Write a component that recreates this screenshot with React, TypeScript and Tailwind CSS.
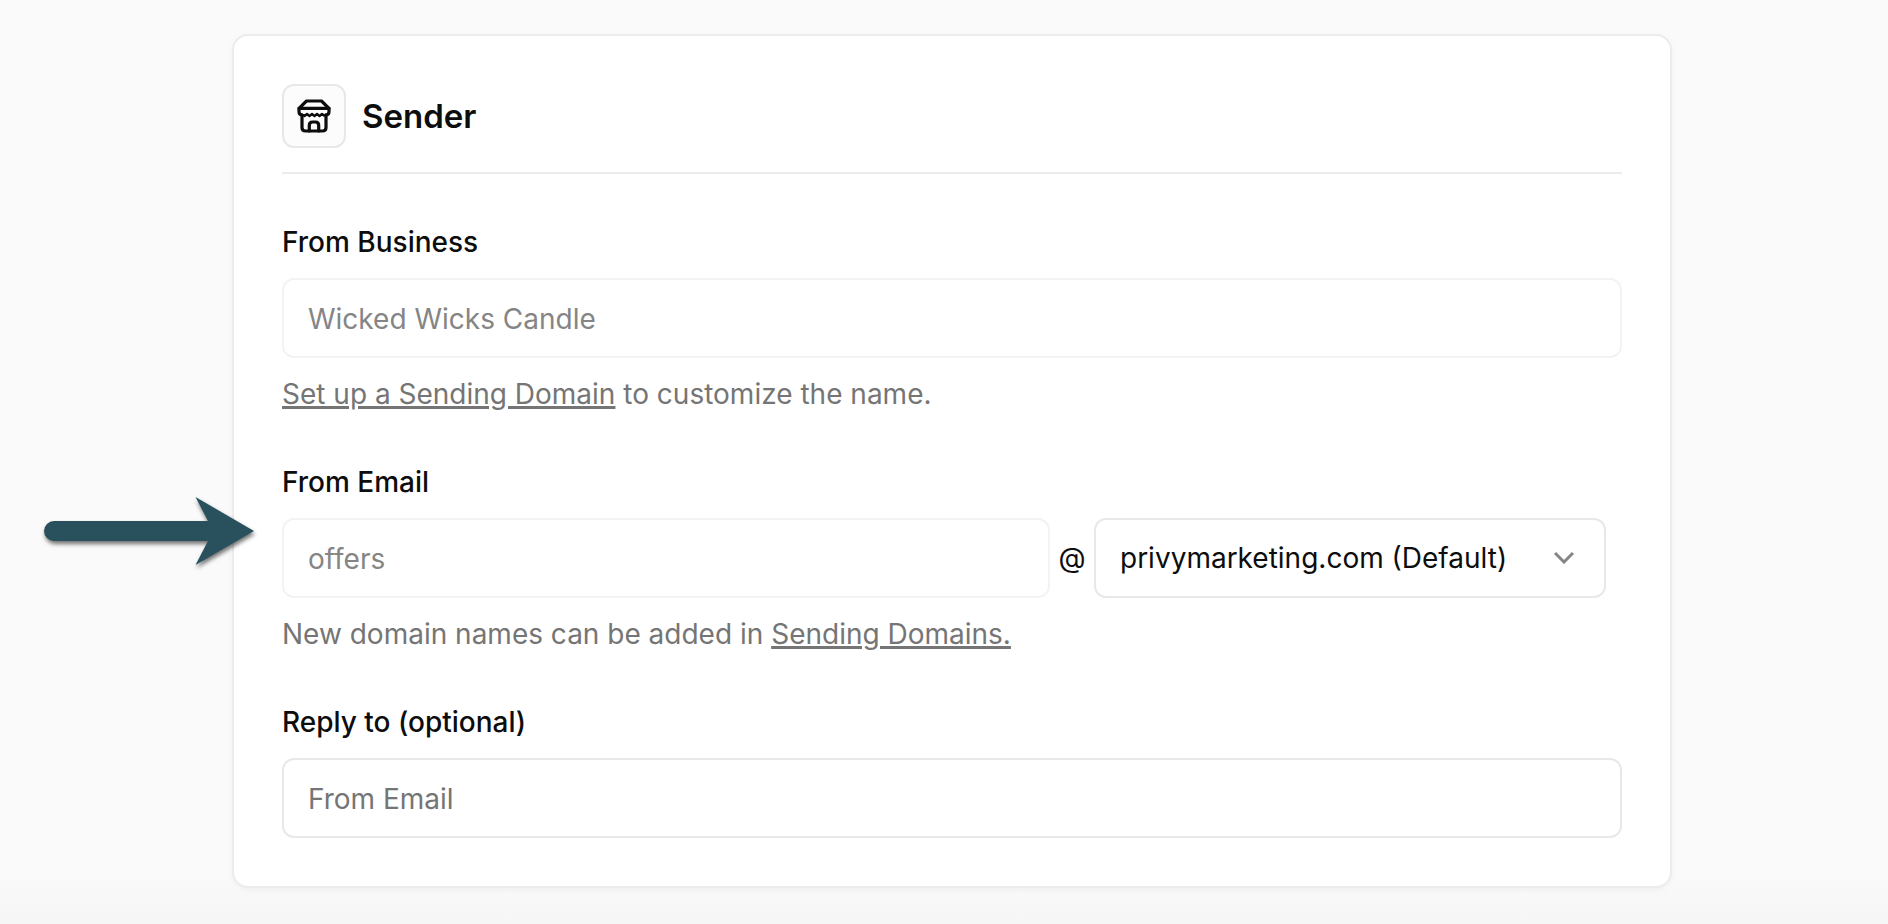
import React from "react";

const labelClass = "block text-[28px] leading-10 font-medium text-[#0d0d0d]";
const helpClass = "mt-4 text-[28px] leading-10 text-[#757575]";
const linkClass = "underline decoration-[3px] underline-offset-2";
const inputClass = "block w-full h-20 rounded-xl border-2 border-[#e8e8e8] bg-white px-6 pt-0.5 text-[28px] text-[#0d0d0d] placeholder:text-[#757575] disabled:border-[#f3f3f3] disabled:text-[#858585]";

const StoreIcon: React.FC = () => (
  <svg
    width="34"
    height="34"
    viewBox="0 0 34 34"
    fill="none"
    stroke="#0d0d0d"
    strokeWidth="3.2"
    strokeLinecap="round"
    strokeLinejoin="round"
    aria-hidden="true"
  >
    <path d="M2 9.300 L9.500 2 H24.500 L32 9.300 Z" />
    <path d="M2 9.300 V12.500 C2 15 3.200 16 5.200 16 M32 9.300 V12.500 C32 15 30.800 16 28.800 16" />
    <path d="M5 15.500 L7.500 17 L10 15 L12.500 17 L15 15 L17.500 17 L20 15 L22.500 17 L25 15 L27 16.500 L29 15.500" strokeWidth="2.4" />
    <path d="M5 16.500 V28.500 C5 31 6 32 8.500 32 H25.500 C28 32 29 31 29 28.500 V16.500" />
    <path d="M12.300 32 V26.500 C12.300 24 13.300 23 15.500 23 H18.500 C20.700 23 21.700 24 21.700 26.500 V32" />
  </svg>
);

const ChevronIcon: React.FC = () => (
  <svg width="20" height="12" viewBox="0 0 20 12" fill="none" stroke="#858585" strokeWidth="3" aria-hidden="true">
    <path d="M1 1 L10 10 L19 1" />
  </svg>
);

const PointerArrow: React.FC = () => (
  <svg
    className="absolute -left-[238px] -top-[22px] overflow-visible drop-shadow-[1px_3px_2px_rgba(0,0,0,0.55)] pointer-events-none"
    width="210"
    height="70"
    viewBox="0 0 210 70"
    aria-hidden="true"
  >
    <path d="M10 25 H164 L151.500 1 L210 35 L151.500 69 L164 45 H10 A10 10 0 0 1 10 25 Z" fill="#28505d" />
  </svg>
);

const App: React.FC = () => {
  return (
    <div className="min-h-screen bg-[linear-gradient(to_bottom,#fafafa_94%,#f6f6f6)] pt-[34px] pb-9 pl-58 pr-54 font-['Inter',sans-serif]">
      <form className="rounded-2xl border-2 border-[#ececec] bg-white p-12 shadow-[0_2px_6px_rgba(0,0,0,0.04)]">
        <div className="flex items-center gap-4 border-b-2 border-[#ececec] pb-6">
          <div className="flex size-16 items-center justify-center rounded-xl border-2 border-[#e8e8e8] bg-[#fcfcfc]">
            <StoreIcon />
          </div>
          <h2 className="text-[33px] leading-10 font-semibold text-[#0d0d0d]">Sender</h2>
        </div>

        <div className="mt-12 flex flex-col gap-12">
          <div>
            <label htmlFor="from-business" className={labelClass}>From Business</label>
            <div className="mt-4">
              <input id="from-business" type="text" className={inputClass} defaultValue="Wicked Wicks Candle" disabled />
            </div>
            <p className={helpClass}>
              <a href="#sending-domain" className={linkClass}>Set up a Sending Domain</a> to customize the name.
            </p>
          </div>

          <div>
            <label htmlFor="from-email" className={labelClass}>From Email</label>
            <div className="relative mt-4 flex items-center gap-2 pr-4">
              <PointerArrow />
              <div className="min-w-0 flex-[3]">
                <input id="from-email" type="text" className={inputClass} defaultValue="offers" disabled />
              </div>
              <span className="w-7 text-center text-[28px] leading-10 text-[#0d0d0d]">@</span>
              <div className="relative min-w-0 flex-[2]">
                <select
                  aria-label="Sending domain"
                  className="block w-full h-20 appearance-none rounded-xl border-2 border-[#e8e8e8] bg-white pl-6 pr-16 text-[28px] text-[#0d0d0d]"
                >
                  <option>privymarketing.com (Default)</option>
                </select>
                <span className="pointer-events-none absolute inset-y-0 right-8 flex items-center">
                  <ChevronIcon />
                </span>
              </div>
            </div>
            <p className={helpClass}>
              New domain names can be added in <a href="#sending-domains" className={linkClass}>Sending Domains.</a>
            </p>
          </div>

          <div>
            <label htmlFor="reply-to" className={labelClass}>Reply to (optional)</label>
            <div className="mt-4">
              <input id="reply-to" type="email" className={inputClass} placeholder="From Email" />
            </div>
          </div>
        </div>
      </form>
    </div>
  );
};

export default App;
